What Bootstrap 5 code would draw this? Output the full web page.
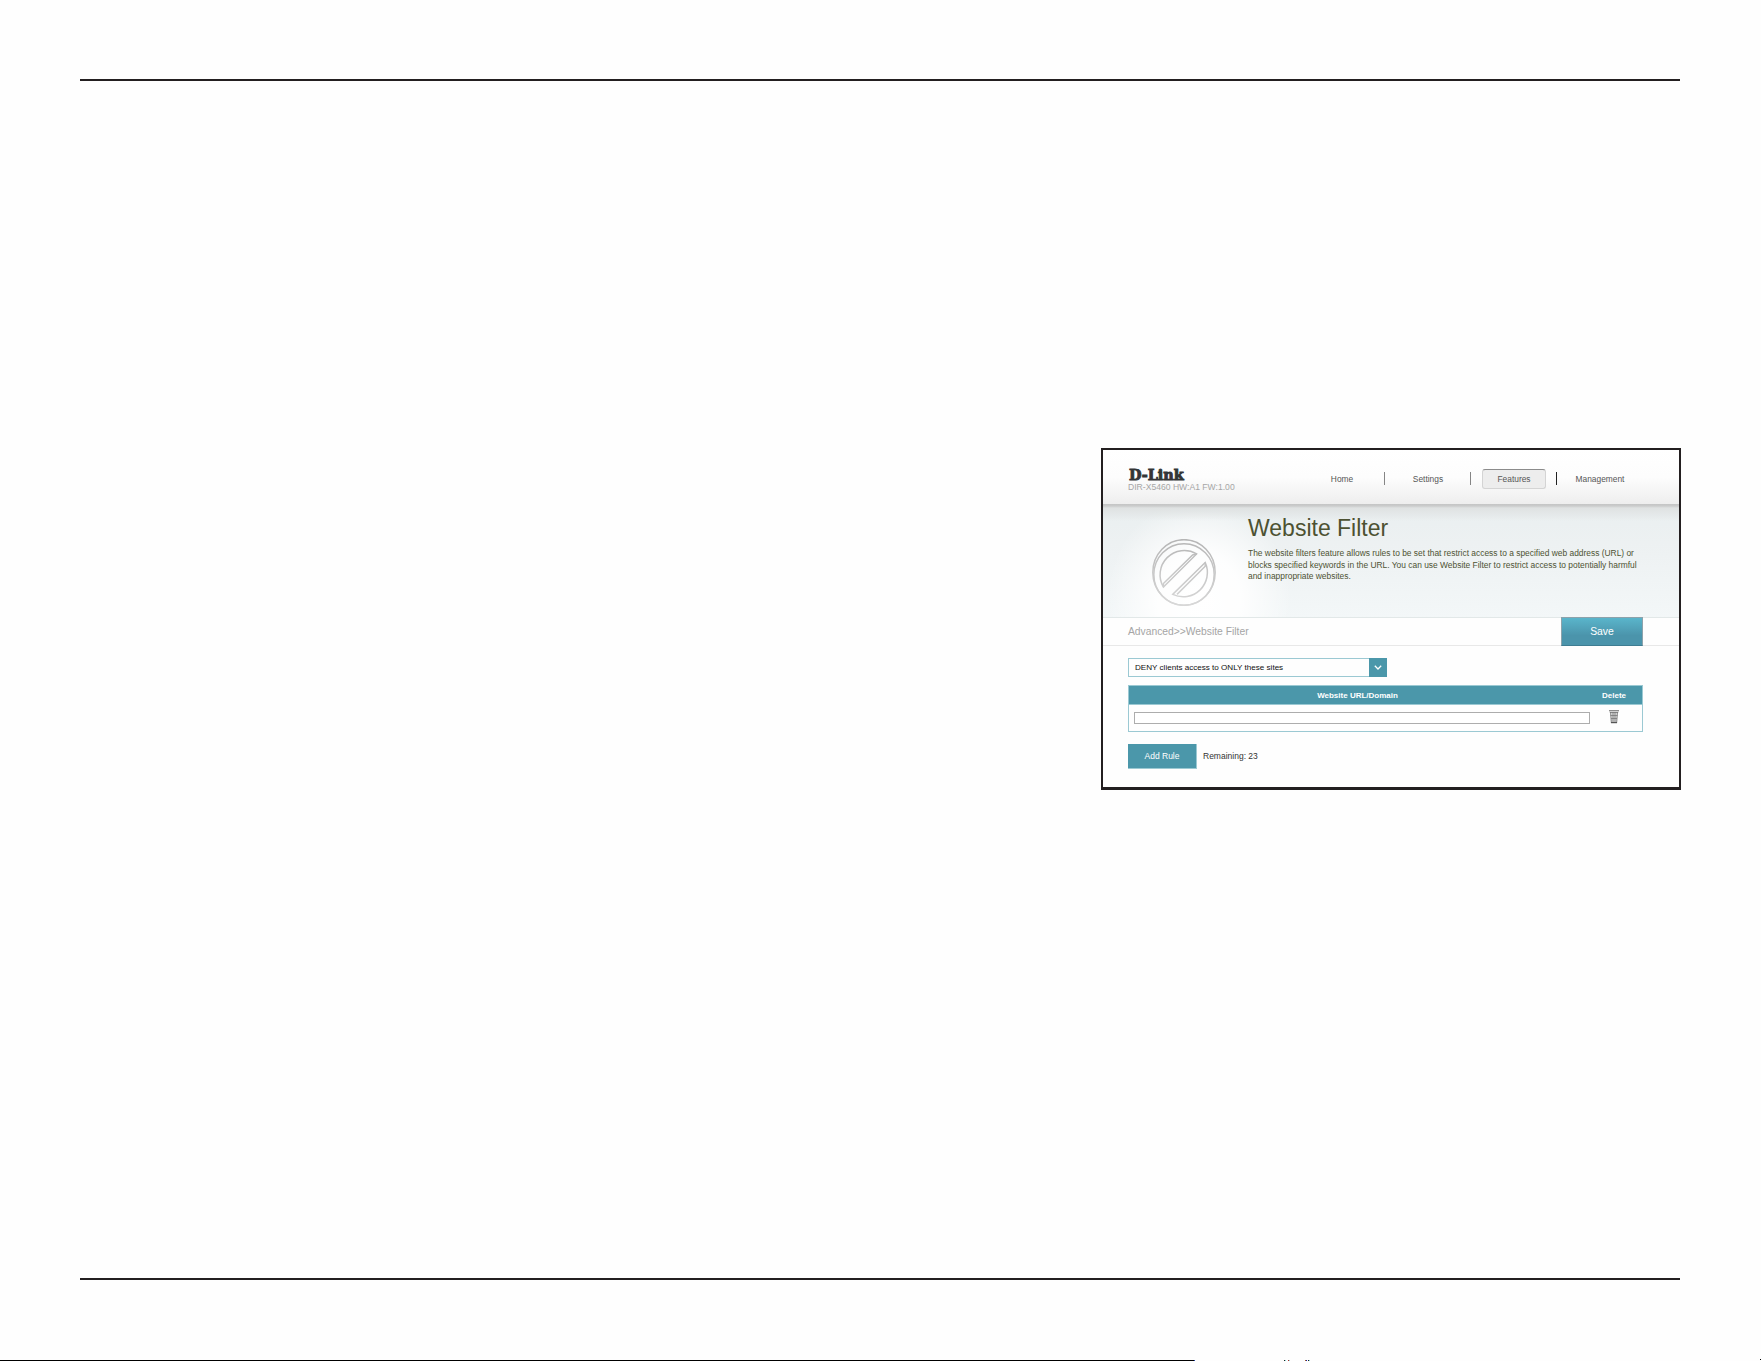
<!DOCTYPE html>
<html lang="en">
<head>
  <meta charset="UTF-8" />
  <meta name="viewport" content="width=device-width, initial-scale=1" />
  <title>Website Filter</title>
  <link href="https://cdn.jsdelivr.net/npm/bootstrap@5.3.3/dist/css/bootstrap.min.css" rel="stylesheet" />
  <style>
    body {
      font-family: "Liberation Sans", Arial, sans-serif;
      background: #fefefe;
      color: #333;
    }
    .sheet {
      height: 1361px;
      padding: 79px 80px 0 80px;
      overflow: hidden;
    }
    .rule {
      width: 1600px;
      height: 2px;
      background: #231f20;
      flex: none;
    }
    .router {
      width: 580px;
      height: 342px;
      margin: 367px 0 488px 0;
      border: 2px solid #231f20;
      border-bottom-width: 3px;
      background: #fefefe;
      flex: none;
    }
    .topbar {
      height: 54px;
      padding-left: 25px;
      background: linear-gradient(#fff 0, #fdfdfd 50%, #eeeeee 100%);
    }
    .brand-name {
      font: bold 14.4px/16px "DejaVu Serif", serif;
      color: #333536;
      -webkit-text-stroke: .9px #333536;
      padding: 17px 0 0 1px;
      white-space: nowrap;
    }
    .model {
      font-size: 8.6px;
      line-height: 10px;
      margin-top: -1px;
      color: #a6a6a6;
      white-space: nowrap;
    }
    .menu {
      margin: 19px 47px 0 0;
      font-size: 8.4px;
    }
    .menu a {
      width: 64px;
      height: 20px;
      line-height: 20px;
      text-align: center;
      color: #555;
      text-decoration: none;
      margin-left: 11px;
    }
    .menu a.current {
      border: 1px solid #d4d4d4;
      border-top-color: #8b8b8b;
      border-radius: 3px;
      background: #ededed;
      line-height: 18px;
    }
    .menu .sep {
      width: 1px;
      height: 13px;
      margin: 3px 0 0 10px;
      background: #858585;
    }
    .menu .sep.strong {
      background: #222;
    }
    .hero {
      height: 114px;
      border-bottom: 1px solid #e2e8e8;
      background:
        linear-gradient(#c4c5c5 0, #cbcccc 2px, #dfe2e2 4px, rgba(230,234,235,0) 17px),
        radial-gradient(ellipse 92px 100px at 96px 94px, #fff 0, rgba(255,255,255,.9) 45%, rgba(255,255,255,0) 100%),
        linear-gradient(#e9eff0 0, #edf1f2 35%, #f3f7f8 100%);
    }
    .hero-icon {
      width: 64px;
      height: 67px;
      margin: 35px 32px 0 49px;
      flex: none;
    }
    .hero h1 {
      font-size: 23px;
      line-height: 26px;
      font-weight: 400;
      color: #4d5232;
      margin: 11px 0 7px;
      white-space: nowrap;
    }
    .hero p {
      font-size: 8.42px;
      line-height: 11.7px;
      color: #4d5232;
      margin: 0;
      white-space: nowrap;
    }
    .crumbs {
      height: 28px;
      padding: 0 36px 0 25px;
      border-bottom: 1px solid #e8e8e8;
      font-size: 10.3px;
      line-height: 28px;
      color: #a5a5a5;
    }
    .btn-save {
      width: 82px;
      height: 29px;
      margin-top: -1px;
      padding: 0;
      border: 1px solid #8da2ab;
      border-bottom-color: #3f7d92;
      border-radius: 0;
      background: linear-gradient(#5ab5cb 0, #4b94ab 65%, #4b94ab 100%);
      color: #fff;
      font-size: 10.4px;
      line-height: 28px;
    }
    .filter-body {
      padding: 12px 38px 0 25px;
    }
    .mode {
      width: 259px;
      height: 19px;
      padding-left: 6px;
      border: 1px solid #9bc9d3;
      font-size: 8.08px;
      line-height: 17px;
      color: #111;
    }
    .mode .arrow {
      width: 18px;
      height: 19px;
      margin: -1px -1px 0 0;
      background: #4b97aa;
    }
    .rules {
      margin-top: 8px;
      width: 515px;
      height: 47px;
      border: 1px solid #9bc9d3;
    }
    .rules-head {
      height: 19px;
      border-bottom: 1px solid #9bc9d3;
      background: #4b97aa;
      color: #fff;
      font-size: 8px;
      font-weight: 700;
      line-height: 19px;
      text-align: center;
    }
    .col-url { width: 457px; flex: none; }
    .col-del { width: 57px; text-align: center; }
    .url-input {
      display: block;
      width: 456px;
      height: 12px;
      margin: 7px 0 0 5px;
      border: 1px solid #adadad;
      background: #fff;
      padding: 0;
    }
    .trash {
      margin: 5px 0 0 0;
    }
    .add-row {
      margin-top: 12px;
    }
    .btn-add {
      width: 69px;
      height: 25px;
      padding: 0;
      border: 0 solid #9bc9d3;
      border-width: 0 1px 1px 0;
      border-radius: 0;
      background: #4b97aa;
      color: #fff;
      font-size: 8.5px;
      line-height: 24px;
    }
    .remaining {
      font-size: 8.5px;
      margin-left: 6px;
    }
    .page-edge {
      position: absolute;
      left: 0;
      top: 1359px;
    }
  </style>
</head>
<body>
  <div class="sheet d-flex flex-column">
    <div class="rule"></div>

    <div class="router align-self-end">
      <div class="topbar d-flex justify-content-between">
        <div>
          <div class="brand-name">D-Link</div>
          <div class="model">DIR-X5460 HW:A1 FW:1.00</div>
        </div>
        <nav class="menu d-flex align-items-start">
          <a href="#">Home</a>
          <span class="sep"></span>
          <a href="#">Settings</a>
          <span class="sep"></span>
          <a href="#" class="current">Features</a>
          <span class="sep strong"></span>
          <a href="#">Management</a>
        </nav>
      </div>

      <div class="hero d-flex align-items-start">
        <svg class="hero-icon" viewBox="0 0 192 202">
          <defs>
            <linearGradient id="ring" x1="0" y1="0" x2="0" y2="202" gradientUnits="userSpaceOnUse">
              <stop offset="0" stop-color="#b5b5b5" />
              <stop offset="1" stop-color="#d8d8d8" />
            </linearGradient>
          </defs>
          <g fill="none" stroke="url(#ring)" stroke-width="4.5">
            <ellipse cx="96" cy="101" rx="94" ry="99" />
            <ellipse cx="96" cy="107" rx="91" ry="93" />
            <path d="M134 45 A73 73 0 0 0 34 145 Z" />
            <path d="M134 45 L122 48 L34 134 V145" />
            <path d="M160 71 A73 73 0 0 1 62 167 Z" />
            <path d="M160 71 L160 82 L75 167" />
          </g>
        </svg>
        <div>
          <h1>Website Filter</h1>
          <p>The website filters feature allows rules to be set that restrict access to a specified web address (URL) or<br />
            blocks specified keywords in the URL. You can use Website Filter to restrict access to potentially harmful<br />
            and inappropriate websites.</p>
        </div>
      </div>

      <div class="crumbs d-flex justify-content-between">
        <span>Advanced&gt;&gt;Website Filter</span>
        <button type="button" class="btn btn-save">Save</button>
      </div>

      <div class="filter-body">
        <div class="mode d-flex justify-content-between">
          <span>DENY clients access to ONLY these sites</span>
          <span class="arrow d-flex align-items-center justify-content-center">
            <svg width="8" height="5" viewBox="0 0 8 5"><path d="M.8 .8 L4 4 L7.2 .8" fill="none" stroke="#fff" stroke-width="1.3" /></svg>
          </span>
        </div>

        <div class="rules">
          <div class="rules-head d-flex">
            <div class="col-url">Website URL/Domain</div>
            <div class="col-del">Delete</div>
          </div>
          <div class="d-flex">
            <div class="col-url"><input type="text" class="url-input" aria-label="Website URL" /></div>
            <div class="col-del d-flex justify-content-center">
              <svg class="trash" width="10" height="14" viewBox="0 0 10 14">
                <path d="M0 0 H10 V2 H9 L8 14 H2 L1 2 H0 Z" fill="#dadada" />
                <path d="M0 .6 H10 M.8 2.5 H9.2" stroke="#858585" fill="none" />
                <path d="M1.5 2 L2.4 13 M4 2 V13 M6 2 V13 M8.5 2 L7.6 13 M1.5 5.5 H8.5 M2 8.5 H8" stroke="#777" stroke-width=".8" fill="none" />
                <path d="M2 12.5 H8" stroke="#555" fill="none" />
              </svg>
            </div>
          </div>
        </div>

        <div class="add-row d-flex align-items-center">
          <button type="button" class="btn btn-add">Add Rule</button>
          <span class="remaining">Remaining: 23</span>
        </div>
      </div>
    </div>

    <div class="rule"></div>
  </div>

  <svg class="page-edge" width="1761" height="2" viewBox="0 0 1761 2" shape-rendering="crispEdges">
    <rect x="0" y="1" width="1194" height="1" fill="#000" />
    <rect x="1194" y="1" width="1" height="1" fill="#24a" />
    <rect x="1284" y="1" width="1" height="1" fill="#222" />
    <rect x="1285" y="1" width="1" height="1" fill="#8dd" />
    <rect x="1288" y="1" width="1" height="1" fill="#b22" />
    <rect x="1289" y="1" width="1" height="1" fill="#8dd" />
    <rect x="1305" y="1" width="1" height="1" fill="#a62" />
    <rect x="1306" y="1" width="1" height="1" fill="#22a" />
    <rect x="1308" y="1" width="1" height="1" fill="#222" />
    <rect x="1309" y="1" width="1" height="1" fill="#8dd" />
    <rect x="1760" y="0" width="1" height="1" fill="#000" />
  </svg>
  <script src="https://cdn.jsdelivr.net/npm/bootstrap@5.3.3/dist/js/bootstrap.bundle.min.js"></script>
</body>
</html>
